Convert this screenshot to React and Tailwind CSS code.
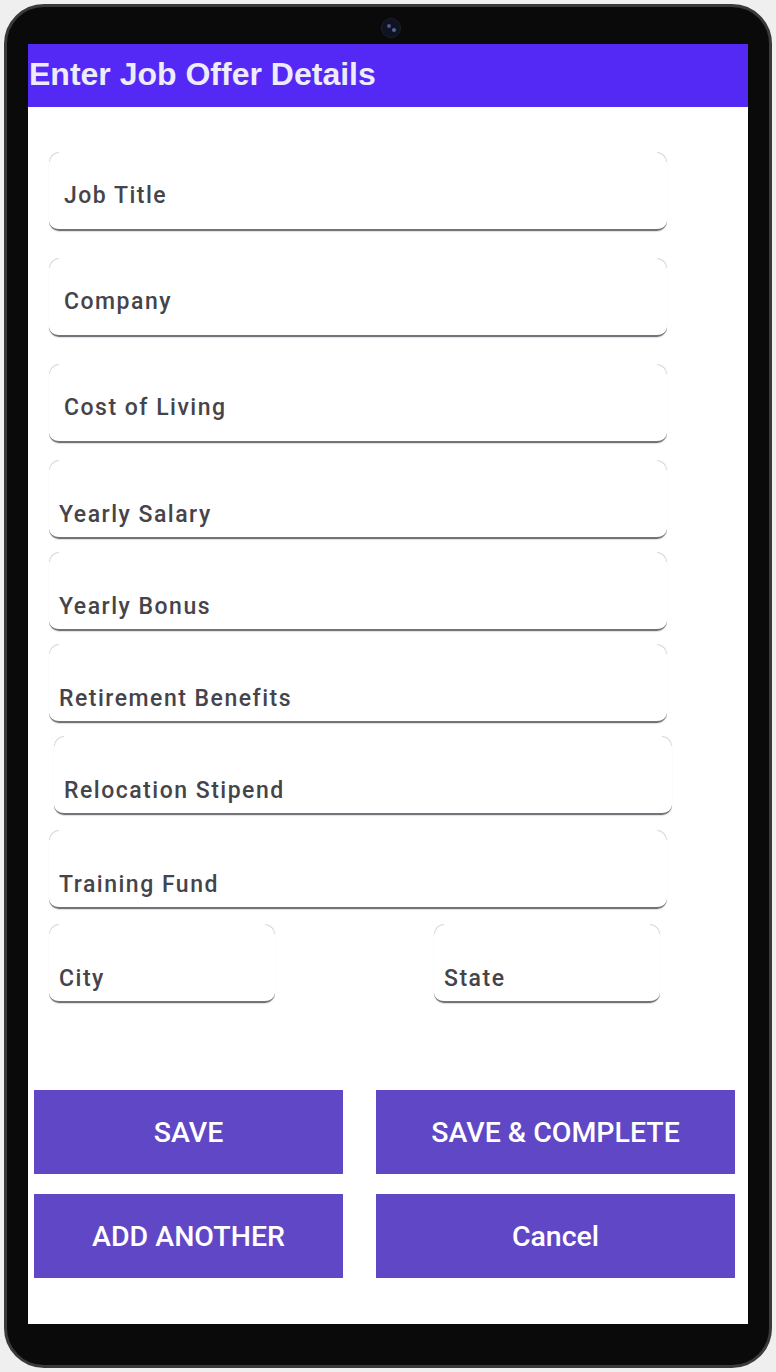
import React from "react";

const fields = [
  { label: "Job Title", mt: "mt-[45px]", ml: "ml-[21px]", px: "pl-[15px]", pt: "pt-[31px]" },
  { label: "Company", mt: "mt-[27px]", ml: "ml-[21px]", px: "pl-[15px]", pt: "pt-[31px]" },
  { label: "Cost of Living", mt: "mt-[27px]", ml: "ml-[21px]", px: "pl-[15px]", pt: "pt-[31px]" },
  { label: "Yearly Salary", mt: "mt-[17px]", ml: "ml-[21px]", px: "pl-[10px]", pt: "pt-[42px]" },
  { label: "Yearly Bonus", mt: "mt-[13px]", ml: "ml-[21px]", px: "pl-[10px]", pt: "pt-[42px]" },
  { label: "Retirement Benefits", mt: "mt-[13px]", ml: "ml-[21px]", px: "pl-[10px]", pt: "pt-[42px]" },
  { label: "Relocation Stipend", mt: "mt-[13px]", ml: "ml-[26px]", px: "pl-[10px]", pt: "pt-[42px]" },
  { label: "Training Fund", mt: "mt-[15px]", ml: "ml-[21px]", px: "pl-[10px]", pt: "pt-[42px]" },
];

function Field({ label, className = "", pad = "pl-[10px]", pt = "pt-[42px]" }) {
  return (
    <div
      className={`relative h-[79px] rounded-[10px] bg-white border-b-2 border-[#74737a] shadow-[0_1px_1px_rgba(0,0,0,0.12)] ${pad} ${pt} ${className}`}
    >
      <span className="pointer-events-none absolute left-0 top-0 h-[10px] w-[10px] rounded-tl-[10px] border-l border-t border-[#d6d6d6]" />
      <span className="pointer-events-none absolute right-0 top-0 h-[10px] w-[10px] rounded-tr-[10px] border-r border-t border-[#d6d6d6]" />
      <div className="text-[23px] leading-[26px] font-medium tracking-[1.5px] text-[#45444b] font-['Roboto',sans-serif] whitespace-nowrap">
        {label}
      </div>
    </div>
  );
}

function ActionButton({ children, className = "" }) {
  return (
    <button
      className={`h-[84px] bg-[#6047c6] text-white text-[28.5px] font-medium font-['Roboto',sans-serif] flex items-center justify-center pt-[3px] ${className}`}
    >
      {children}
    </button>
  );
}

export default function App() {
  return (
    <div className="w-[776px] h-[1372px] bg-[#efefef] p-[4px]">
      <div className="relative h-full rounded-[40px] bg-[#0a0a0a] border-[3px] border-[#3a3a3a] pl-[21px] pr-[21px] pt-[37px] pb-[41px]">
        {/* camera */}
        <div className="absolute left-[374px] top-[11px] h-[20px] w-[20px] rounded-full bg-[#0f1220] border border-[#1d2030]">
          <span className="absolute left-[5px] top-[5px] h-[4px] w-[4px] rounded-full bg-[#5b4f8f]" />
          <span className="absolute left-[10px] top-[9px] h-[4px] w-[4px] rounded-full bg-[#4e6c91]" />
        </div>

        <div className="h-full bg-white flex flex-col">
          <div className="h-[63px] bg-[#5429f5] flex items-center pl-[1px] pb-[4px] shrink-0">
            <h1 className="text-[32px] leading-[36px] font-bold text-[#eeecfb] font-['Liberation_Sans',Arial,sans-serif] whitespace-nowrap">
              Enter Job Offer Details
            </h1>
          </div>

          {fields.map((f) => (
            <Field
              key={f.label}
              label={f.label}
              pad={f.px}
              pt={f.pt}
              className={`${f.mt} ${f.ml} w-[618px]`}
            />
          ))}

          <div className="mt-[15px] flex">
            <Field label="City" className="ml-[21px] w-[226px]" />
            <Field label="State" className="ml-[159px] w-[226px]" />
          </div>

          <div className="mt-[87px] grid grid-cols-[309px_359px] gap-x-[33px] gap-y-[20px] pl-[6px]">
            <ActionButton>SAVE</ActionButton>
            <ActionButton>SAVE &amp; COMPLETE</ActionButton>
            <ActionButton>ADD ANOTHER</ActionButton>
            <ActionButton>Cancel</ActionButton>
          </div>
        </div>
      </div>
    </div>
  );
}
